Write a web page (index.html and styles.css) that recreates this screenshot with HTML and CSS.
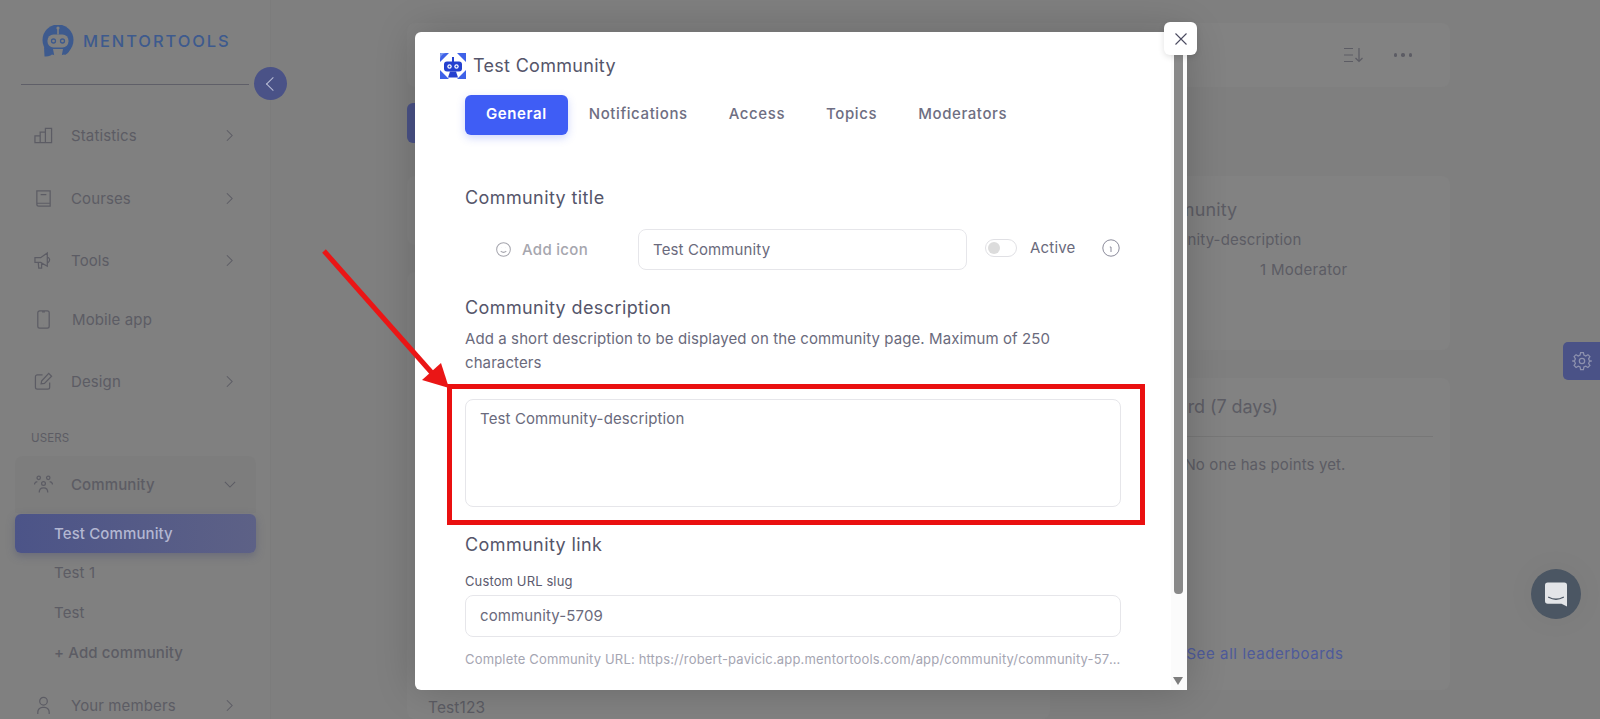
FILE: index.html
```html
<!DOCTYPE html>
<html lang="en">
  <head>
    <meta charset="UTF-8" />
    <meta name="viewport" content="width=device-width, initial-scale=1.0" />
    <title>Community settings</title>
    <link rel="stylesheet" href="styles.css">
  </head>
  <body>
    <div class="page">
      <aside class="side">
        <div class="brand">
          <svg class="brand-logo" viewBox="0 0 32 32" width="32" height="32">
            <circle cx="16" cy="15" r="15.5" fill="#3d5a8e"/>
            <path d="M2 22 L2.500 31.500 Q9 32 12 27 Z" fill="#3d5a8e"/>
            <path d="M19 27 L23 30 Q28 27 29 22 Z" fill="#3d5a8e"/>
            <path d="M11 24 H21 L19.500 32 H12.500 Z" fill="#808080"/>
            <rect x="5.500" y="9.500" width="21" height="13" rx="6" fill="#808080"/>
            <circle cx="11.500" cy="16" r="2" fill="none" stroke="#3d5a8e" stroke-width="1.300"/>
            <circle cx="20.500" cy="16" r="2" fill="none" stroke="#3d5a8e" stroke-width="1.300"/>
            <circle cx="16" cy="3" r="1.600" fill="#808080"/>
            <rect x="15.200" y="3" width="1.600" height="6.500" fill="#808080"/>
          </svg>
          <span class="brand-name">MENTORTOOLS</span>
        </div>
        <nav class="nav">
          <a class="nav-item">
            <svg class="nav-icon" viewBox="0 0 20 20"><path d="M1 10.500h5.500v7H1zM6.500 6.500H12v11H6.500zM12 2.500h6.500v15H12z"/></svg>
            <span>Statistics</span>
            <svg class="chev" viewBox="0 0 8 14"><path d="M1 1l6 6-6 6"/></svg>
          </a>
          <a class="nav-item nav-courses">
            <svg class="nav-icon" viewBox="0 0 20 20"><path d="M3 14.500V2h14v16H5a2 2 0 0 1-2-2zM3 15h14M7 6h6"/></svg>
            <span>Courses</span>
            <svg class="chev" viewBox="0 0 8 14"><path d="M1 1l6 6-6 6"/></svg>
          </a>
          <a class="nav-item nav-tight">
            <svg class="nav-icon" viewBox="0 0 20 20"><path d="M1 7h6l7-5v14l-7-4H1zM4.500 12l.5 6h3v-6M14 6q5 3 0 7"/></svg>
            <span>Tools</span>
            <svg class="chev" viewBox="0 0 8 14"><path d="M1 1l6 6-6 6"/></svg>
          </a>
          <a class="nav-item nav-courses">
            <svg class="nav-icon" viewBox="0 0 20 20"><rect x="4" y="1" width="12" height="18" rx="2"/><path d="M8.500 2h3M10 16h.1"/></svg>
            <span class="nav-shift">Mobile app</span>
          </a>
          <a class="nav-item">
            <svg class="nav-icon" viewBox="0 0 20 20"><path d="M9 3H3.500A2 2 0 0 0 1.500 5v11a2 2 0 0 0 2 2h11a2 2 0 0 0 2-2v-5M8 9.500L15.500 1.500l3 3L11 12l-3.500.5z"/></svg>
            <span>Design</span>
            <svg class="chev" viewBox="0 0 8 14"><path d="M1 1l6 6-6 6"/></svg>
          </a>
          <div class="nav-label">USERS</div>
          <a class="nav-item nav-open">
            <svg class="nav-icon" viewBox="0 0 20 20"><circle cx="5" cy="3" r="1.800"/><circle cx="15" cy="3" r="1.800"/><circle cx="10" cy="9" r="2"/><path d="M.5 10q0-2.500 3-3M19.500 10q0-2.500-3-3M5.500 18.500q0-5 4.500-5t4.500 5"/></svg>
            <span>Community</span>
            <svg class="chev chev-down" viewBox="0 0 14 8"><path d="M1 1l6 6 6-6"/></svg>
          </a>
          <a class="sub-item sub-now">Test Community</a>
          <a class="sub-item">Test 1</a>
          <a class="sub-item">Test</a>
          <a class="sub-item sub-add">+ Add community</a>
          <a class="nav-item nav-last">
            <svg class="nav-icon" viewBox="0 0 20 20"><circle cx="10" cy="5.500" r="4"/><path d="M4 19v-2a5 5 0 0 1 5-5h2a5 5 0 0 1 5 5v2"/></svg>
            <span>Your members</span>
            <svg class="chev" viewBox="0 0 8 14"><path d="M1 1l6 6-6 6"/></svg>
          </a>
        </nav>
      </aside>

      <main class="main">
        <div class="topbar">
          <svg class="top-icon" viewBox="0 0 20 16" width="20" height="16"><path d="M1 1.500h9M1 8h9M1 14.500h9M16 1v13M12.500 11l3.500 3.500 3.500-3.500"/></svg>
          <div class="dots"><i></i><i></i><i></i></div>
        </div>
        <div class="new-btn"></div>
        <div class="columns">
          <div class="col">
            <div class="card card-short"></div>
            <div class="card card-feed"><p class="feed-name">Test123</p></div>
          </div>
          <div class="col">
            <div class="card card-info">
              <h3>Test Community</h3>
              <p>Test Community-description</p>
              <div class="stats"><span>1 Moderator</span></div>
            </div>
            <div class="card card-board">
              <h3>Leaderboard (7 days)</h3>
              <p class="board-empty">No one has points yet.</p>
              <a class="board-link">See all leaderboards</a>
            </div>
          </div>
        </div>
      </main>
    </div>

    <div class="gear-tab">
      <svg viewBox="0 0 24 24" width="20" height="20"><circle cx="12" cy="12" r="3.200"/><path d="M10.300 2h3.400l.6 3 2.200 1 2.600-1.600 2.400 2.400L19.900 9.400l1 2.200 3 .4v0l-3 .6-1 2.200 1.600 2.600-2.400 2.400-2.600-1.600-2.200 1-.6 3h-3.400l-.6-3-2.200-1-2.600 1.600-2.400-2.400 1.600-2.600-1-2.200-3-.6v0l3-.4 1-2.200L2.500 6.800l2.400-2.400 2.600 1.600 2.200-1z"/></svg>
    </div>
    <div class="chat-bubble">
      <svg viewBox="0 0 24 26" width="22" height="25"><path d="M3 0h18a3 3 0 0 1 3 3v23l-6-3H3a3 3 0 0 1-3-3V3a3 3 0 0 1 3-3z" fill="#e3e5e8"/><path d="M4 16q8 4.500 16 0" fill="none" stroke="#4b5663" stroke-width="1.500" stroke-linecap="round"/></svg>
    </div>

    <div class="modal">
      <div class="modal-head">
        <svg class="modal-logo" viewBox="0 0 26 26" width="26" height="26">
          <rect width="26" height="26" fill="#fff"/>
          <path d="M0 9V0h9L0 9zM17 0h9v9zM26 17v9h-9zM9 26H0v-9z" fill="#3f62e8"/>
          <path d="M0 6V1q0-1 1-1h5Q1 1 0 6z" fill="#7d9bf2"/>
          <rect x="4" y="8.500" width="18" height="10" rx="3" fill="#2440cf"/>
          <rect x="12" y="4" width="2" height="5" fill="#2440cf"/>
          <path d="M10 18.500h6l2 6H8z" fill="#2440cf"/>
          <circle cx="9.500" cy="13.500" r="2.200" fill="#fff"/>
          <circle cx="16.500" cy="13.500" r="2.200" fill="#fff"/>
          <circle cx="9.500" cy="13.500" r="1" fill="#2440cf"/>
          <circle cx="16.500" cy="13.500" r="1" fill="#2440cf"/>
        </svg>
        <span class="modal-title">Test Community</span>
      </div>
      <ul class="tabs">
        <li class="now">General</li>
        <li>Notifications</li>
        <li>Access</li>
        <li>Topics</li>
        <li>Moderators</li>
      </ul>

      <h4 class="sec sec-first">Community title</h4>
      <div class="title-row">
        <div class="add-icon">
          <svg viewBox="0 0 16 16" width="15" height="15"><circle cx="8" cy="8" r="7.300"/><path d="M5 9.800q3 2.600 6 0M5.800 6h.1M10.200 6h.1"/></svg>
          <span>Add icon</span>
        </div>
        <div class="field field-title">Test Community</div>
        <span class="toggle"><i></i></span>
        <span class="active-label">Active</span>
        <svg class="info" viewBox="0 0 18 18" width="18" height="18"><circle cx="9" cy="9" r="8.200"/><path d="M9 8v5M9 5h.1M7.800 8H9"/></svg>
      </div>

      <h4 class="sec">Community description</h4>
      <p class="hint">Add a short description to be displayed on the community page. Maximum of 250 characters</p>
      <div class="field field-area">Test Community-description</div>

      <h4 class="sec sec-link">Community link</h4>
      <label class="small-label">Custom URL slug</label>
      <div class="field field-slug">community-5709</div>
      <p class="url">Complete Community URL: https://robert-pavicic.app.mentortools.com/app/community/community-5709</p>

      <div class="scroll"><span class="scroll-thumb"></span><span class="scroll-down"></span></div>
    </div>

    <div class="modal-close">
      <svg viewBox="0 0 12 12" width="12" height="12"><path d="M.5.500l11 11M11.500.500l-11 11"/></svg>
    </div>

    <!-- annotation drawn on top of the screenshot -->
    <div class="mark-box"></div>
    <svg class="mark-arrow" width="140" height="150" viewBox="0 0 140 150">
      <path d="M2 2L110 124" stroke="#ea1616" stroke-width="5" fill="none"/>
      <path d="M127 139L119 114L100 131Z" fill="#ea1616"/>
    </svg>
  </body>
</html>
```

FILE: styles.css
```css
* {
  margin: 0;
  padding: 0;
  box-sizing: border-box;
  list-style: none;
}
body {
  height: 100vh;
  overflow: hidden;
  background-color: #7f7f7f;
  color: #5c5c64;
  font-family: Inter, "Noto Sans", sans-serif;
  font-size: 15px;
  letter-spacing: .12px;
}
.page {
  display: flex;
  height: 100%;
}

/* sidebar */
.side {
  width: 271px;
  flex: none;
  background-color: #808080;
  border-right: 1px solid #7c7c7c;
  position: relative;
}
.side::after {
  content: "";
  position: absolute;
  left: 254px;
  top: 67px;
  width: 33px;
  height: 33px;
  border-radius: 50%;
  background: #4a5287;
}
.side::before {
  content: "";
  position: absolute;
  z-index: 1;
  left: 268px;
  top: 79px;
  width: 9px;
  height: 9px;
  border-left: 1px solid #b9bdd6;
  border-bottom: 1px solid #b9bdd6;
  transform: rotate(45deg);
}
.brand {
  height: 85px;
  margin: 0 21px;
  padding: 25px 0 0 21px;
  border-bottom: 1px solid #5f5f68;
  display: flex;
  align-items: flex-start;
}
.brand-logo {
  flex: none;
}
.brand-name {
  margin: 5px 0 0 9px;
  color: #3d5a8e;
  font-size: 16.500px;
  font-weight: 500;
  letter-spacing: 1.900px;
  line-height: 22px;
}
.nav {
  padding-top: 30px;
}
.nav-item {
  display: flex;
  align-items: center;
  height: 40px;
  margin: 0 14px 23px 15px;
  padding-left: 19px;
  color: #5c5c64;
}
.nav-courses {
  margin-bottom: 22px;
}
.nav-tight {
  margin-bottom: 19px;
}
.nav-icon {
  width: 19px;
  height: 19px;
  margin-right: 18px;
  flex: none;
  fill: none;
  stroke: #5c5c64;
  stroke-width: 1.300;
}
.nav-shift {
  margin-left: 1px;
}
.chev {
  width: 7px;
  height: 13px;
  margin-left: auto;
  margin-right: 23px;
  fill: none;
  stroke: #5c5c64;
  stroke-width: 1.200;
}
.chev-down {
  width: 12px;
  height: 7px;
  margin-right: 20px;
}
.nav-label {
  height: 16px;
  margin: 29px 0 10px 31px;
  font-size: 11.500px;
  line-height: 16px;
}
.nav-open {
  height: 57px;
  margin-bottom: 1px;
  background-color: #7d7d7d;
  border-radius: 8px 8px 0 0;
  font-weight: 500;
}
.sub-item {
  display: block;
  height: 39px;
  margin: 0 14px 0 15px;
  padding: 0 0 0 39px;
  line-height: 39px;
  color: #5c5c64;
}
.sub-item + .sub-item {
  height: 40px;
  line-height: 39px;
}
.sub-now {
  border-radius: 6px;
  color: #b3b7d2;
  font-weight: 500;
  background: linear-gradient(90deg, #4c5488, #5d6186);
  box-shadow: 0 3px 8px rgba(60, 66, 110, .35);
}
.sub-add {
  font-weight: 500;
}
.nav-last {
  height: 28px;
  margin-top: 18px;
  margin-bottom: 0;
}

/* main column behind the modal */
.main {
  flex: 1;
  padding: 23px 150px 0 136px;
}
.topbar {
  height: 64px;
  background-color: #828282;
  border-radius: 8px;
  display: flex;
  justify-content: flex-end;
  align-items: center;
  gap: 31px;
  padding: 0 38px 0 0;
}
.top-icon {
  fill: none;
  stroke: #5c5c64;
  stroke-width: 1.200;
}
.dots {
  display: flex;
  gap: 4px;
}
.dots i {
  width: 3.500px;
  height: 3.500px;
  border-radius: 50%;
  background-color: #5c5c64;
}
.new-btn {
  width: 130px;
  height: 40px;
  margin-top: 16px;
  border-radius: 6px;
  background-color: #4a5287;
}
.columns {
  display: grid;
  grid-template-columns: 643px 370px;
  gap: 30px;
  margin-top: 33px;
}
.col {
  display: flex;
  flex-direction: column;
}
.card {
  background-color: #828282;
  border-radius: 8px;
}
.card-short {
  height: 69px;
}
.card-feed {
  height: 447px;
  margin-top: 27px;
  padding: 425px 0 0 21px;
}
.feed-name {
  font-size: 15.500px;
  line-height: 22px;
}
.card-info {
  height: 174px;
  padding: 23px 17px 0;
}
.card-info h3,
.card-board h3 {
  font-size: 18px;
  font-weight: 400;
  line-height: 22px;
}
.card-info p {
  margin-top: 8px;
  line-height: 22px;
}
.stats {
  display: flex;
  margin-top: 8px;
  padding-left: 163px;
  line-height: 22px;
  letter-spacing: .3px;
}
.card-board {
  height: 312px;
  margin-top: 28px;
  padding: 18px 17px 0;
}
.card-board h3 {
  height: 41px;
  border-bottom: 1px solid #777;
  letter-spacing: -.1px;
}
.board-empty {
  margin-top: 17px;
  line-height: 22px;
  text-align: center;
}
.board-link {
  display: block;
  margin-top: 167px;
  line-height: 22px;
  text-align: center;
  color: #4e5a9a;
  letter-spacing: .6px;
}

/* floating bits on the right */
.gear-tab {
  position: absolute;
  right: 0;
  top: 342px;
  width: 37px;
  height: 38px;
  background-color: #4a5287;
  border-radius: 5px 0 0 5px;
  display: flex;
  align-items: center;
  justify-content: center;
}
.gear-tab svg {
  fill: none;
  stroke: #8d91ae;
  stroke-width: 1.500;
}
.chat-bubble {
  position: absolute;
  left: 1531px;
  top: 569px;
  width: 50px;
  height: 50px;
  border-radius: 50%;
  background-color: #4b5663;
  box-shadow: 0 0 30px rgba(0, 0, 0, .05);
  display: flex;
  align-items: center;
  justify-content: center;
}

/* modal */
.modal {
  position: absolute;
  left: 415px;
  top: 32px;
  width: 772px;
  height: 658px;
  overflow: hidden;
  background-color: #fff;
  border-radius: 6px 0 0 6px;
  box-shadow: 0 0 40px rgba(0, 0, 0, .2);
  padding: 21px 66px 0 50px;
  color: #5b5b6e;
}
.modal-head {
  display: flex;
  align-items: center;
  height: 26px;
  margin-left: -25px;
}
.modal-title {
  margin-left: 7px;
  font-size: 18px;
  letter-spacing: .3px;
  line-height: 26px;
  color: #55556a;
}
.tabs {
  display: flex;
  gap: 1px;
  margin-top: 16px;
}
.tabs li {
  height: 40px;
  padding: 0 20px;
  font-size: 15px;
  font-weight: 500;
  letter-spacing: .6px;
  line-height: 38px;
  color: #6e6e82;
}
.tabs li.now {
  padding: 0 21px;
  border-radius: 6px;
  color: #fff;
  font-weight: 600;
  background-color: #3f5df5;
  box-shadow: 0 3px 8px rgba(63, 93, 245, .25);
}
.sec {
  font-size: 18px;
  font-weight: 400;
  letter-spacing: .4px;
  line-height: 24px;
  color: #55556a;
}
.sec-first {
  margin-top: 51px;
}
.title-row {
  display: flex;
  align-items: center;
  height: 41px;
  margin-top: 19px;
  margin-bottom: 26px;
}
.add-icon {
  width: 173px;
  padding-left: 31px;
  display: flex;
  align-items: center;
  gap: 11px;
  color: #a6a6ae;
  font-weight: 500;
  letter-spacing: .3px;
}
.add-icon svg {
  fill: none;
  stroke: #a6a6ae;
  stroke-width: 1.100;
}
.field {
  border: 1px solid #e6e6ea;
  border-radius: 8px;
  padding: 0 14px;
  color: #6a6a7c;
}
.field-title {
  width: 329px;
  height: 41px;
  line-height: 39px;
}
.toggle {
  width: 32px;
  height: 18px;
  margin: -4px 0 0 18px;
  padding: 2px;
  border: 1px solid #e0e0e4;
  border-radius: 9px;
}
.toggle i {
  display: block;
  width: 12px;
  height: 12px;
  border-radius: 50%;
  background-color: #dcdcdc;
}
.active-label {
  margin: -4px 0 0 13px;
  letter-spacing: .2px;
  color: #6a6a7c;
}
.info {
  margin: -4px 0 0 26px;
  fill: none;
  stroke: #8a8a9a;
  stroke-width: 1;
}
.hint {
  margin-top: 7px;
  font-size: 15px;
  letter-spacing: .09px;
  line-height: 24px;
  color: #6a6a7c;
}
.field-area {
  height: 108px;
  margin-top: 24px;
  padding-top: 8px;
  line-height: 22px;
}
.sec-link {
  margin-top: 26px;
}
.small-label {
  display: block;
  margin-top: 15px;
  font-size: 13px;
  line-height: 18px;
}
.field-slug {
  height: 42px;
  margin-top: 5px;
  line-height: 39px;
}
.url {
  margin-top: 13px;
  font-size: 13px;
  letter-spacing: .17px;
  line-height: 18px;
  color: #a5a5b2;
  white-space: nowrap;
  overflow: hidden;
  text-overflow: ellipsis;
}
.scroll {
  position: absolute;
  right: 0;
  top: 0;
  bottom: 0;
  width: 16px;
  background-color: #fbfbfb;
}
.scroll-thumb {
  position: absolute;
  left: 3px;
  top: 8px;
  width: 9px;
  height: 554px;
  border-radius: 4px;
  background-color: #898989;
}
.scroll-down {
  position: absolute;
  left: 2px;
  bottom: 5px;
  border-left: 5.500px solid transparent;
  border-right: 5.500px solid transparent;
  border-top: 8px solid #7d7d7d;
}
.modal-close {
  position: absolute;
  left: 1164px;
  top: 22px;
  width: 33px;
  height: 33px;
  border-radius: 6px;
  background-color: #fff;
  box-shadow: 0 2px 6px rgba(0, 0, 0, .12);
  display: flex;
  align-items: center;
  justify-content: center;
}
.modal-close svg {
  fill: none;
  stroke: #4b4b60;
  stroke-width: 1.100;
}

/* red annotation */
.mark-box {
  position: absolute;
  left: 447px;
  top: 384px;
  width: 698px;
  height: 141px;
  border: 5px solid #ea1010;
}
.mark-arrow {
  position: absolute;
  left: 322px;
  top: 249px;
}
```
